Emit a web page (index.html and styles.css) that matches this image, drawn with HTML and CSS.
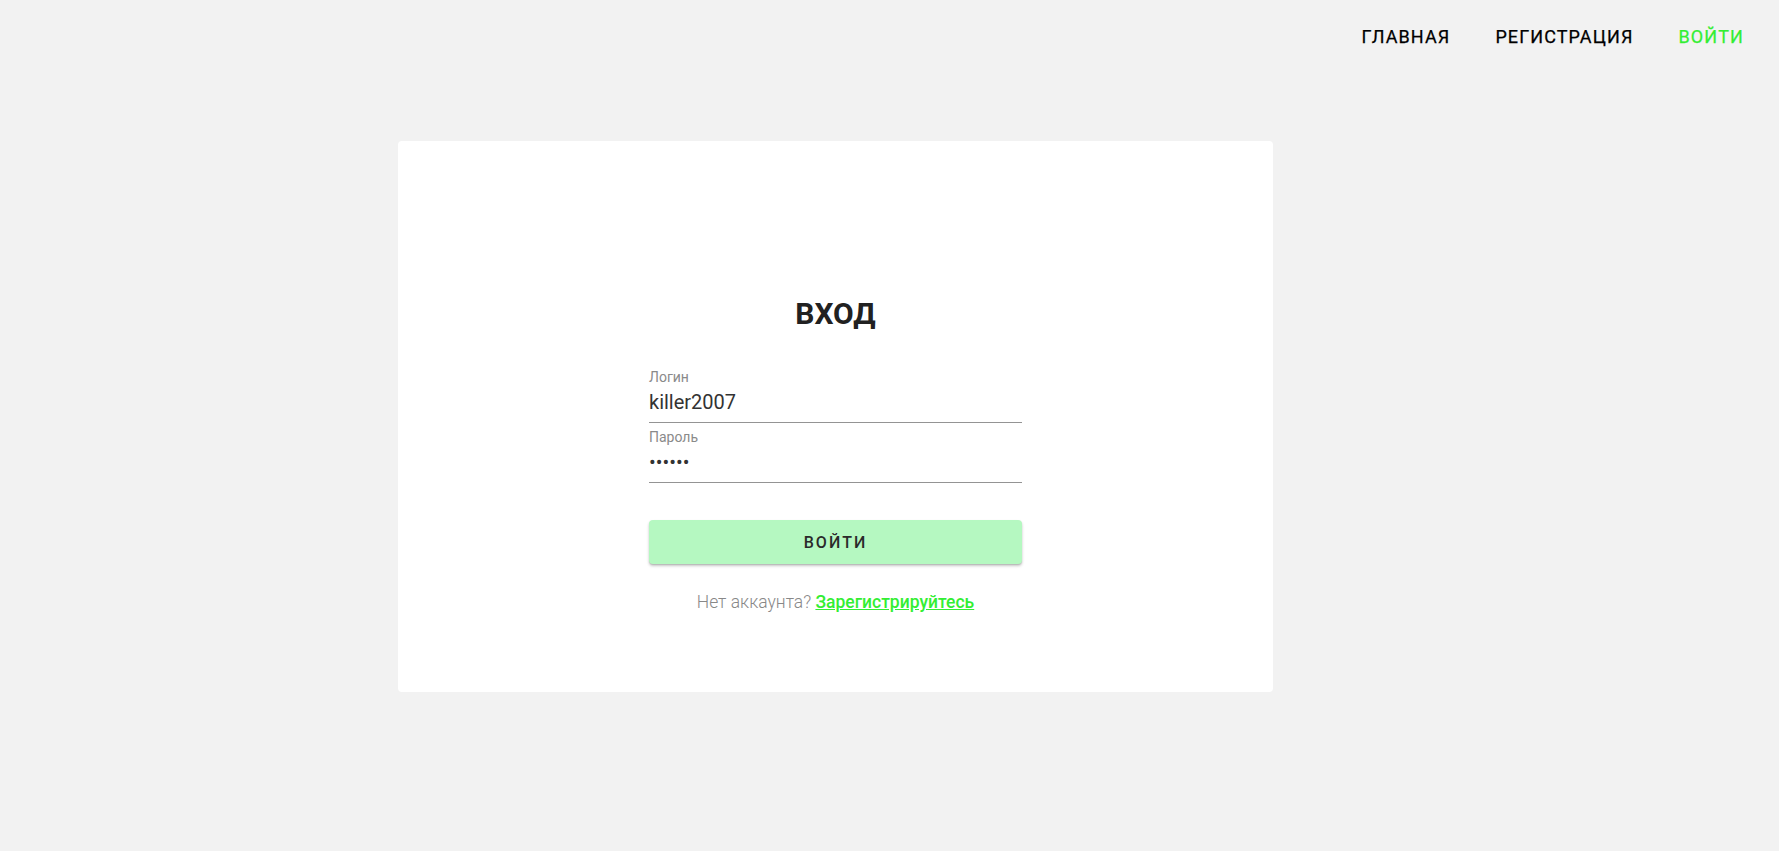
FILE: index.html
```html
<!DOCTYPE html>
<html lang="ru">
<head>
<meta charset="utf-8">
<title>Вход</title>
<link rel="stylesheet" href="styles.css">
</head>
<body>
<header class="topbar">
  <nav class="nav">
    <a class="nav-link" href="#">Главная</a>
    <a class="nav-link" href="#">Регистрация</a>
    <a class="nav-link active" href="#">Войти</a>
  </nav>
</header>
<main class="main">
  <section class="card">
    <form class="form">
      <h1 class="title">ВХОД</h1>
      <div class="field">
        <label class="field-label">Логин</label>
        <input class="field-input" type="text" value="killer2007">
      </div>
      <div class="field">
        <label class="field-label">Пароль</label>
        <input class="field-input" type="password" value="qwerty">
      </div>
      <button class="submit" type="button">Войти</button>
      <p class="hint">Нет аккаунта? <a class="hint-link" href="#">Зарегистрируйтесь</a></p>
    </form>
  </section>
</main>
</body>
</html>
```
FILE: styles.css
```css
* { box-sizing: border-box; }
html, body { margin: 0; padding: 0; }
body {
  background: #f2f2f2;
  font-family: Roboto, "Liberation Sans", Arial, sans-serif;
  color: #212121;
  min-height: 851px;
}
.topbar {
  height: 141px;
  display: flex;
  justify-content: flex-end;
  align-items: flex-start;
  padding: 25px 35px 0 0;
}
.nav {
  display: flex;
  gap: 45px;
}
.nav-link {
  font-size: 18px;
  line-height: 24px;
  font-weight: 400;
  letter-spacing: 1.1px;
  text-transform: uppercase;
  color: #000;
  text-decoration: none;
  -webkit-text-stroke: 0.25px currentColor;
}
.nav-link.active { color: #33ee33; }
.main {
  padding-left: 398px;
}
.card {
  width: 875px;
  background: #fff;
  border-radius: 4px;
  padding: 153px 0 78px;
  display: flex;
  justify-content: center;
}
.form {
  width: 373px;
  display: flex;
  flex-direction: column;
}
.title {
  margin: 0 0 35px;
  text-align: center;
  font-size: 30px;
  line-height: 40px;
  font-weight: 700;
  color: #212121;
}
.field {
  display: flex;
  flex-direction: column;
  border-bottom: 1px solid #949494;
  margin-bottom: 6px;
}
.field-label {
  font-size: 14px;
  line-height: 16px;
  color: #8a8a8a;
}
.field-input {
  margin-top: 5px;
  padding: 0 0 8px;
  border: none;
  outline: none;
  background: transparent;
  font-family: inherit;
  font-size: 20px;
  line-height: 24px;
  height: 32px;
  color: #333;
}
.submit {
  margin-top: 31px;
  height: 44px;
  border: none;
  border-radius: 4px;
  background: #b5f8c1;
  box-shadow: 0 2px 3px rgba(0,0,0,0.22), 0 1px 1px rgba(0,0,0,0.1);
  font-family: inherit;
  font-size: 16px;
  font-weight: 500;
  letter-spacing: 2px;
  text-transform: uppercase;
  color: #2a2a2a;
}
.hint {
  margin: 26px 0 0;
  text-align: center;
  font-size: 17.5px;
  line-height: 24px;
  font-weight: 300;
  color: #888;
}
.hint-link {
  color: #33ee33;
  font-weight: 500;
  text-decoration: underline;
}
```
